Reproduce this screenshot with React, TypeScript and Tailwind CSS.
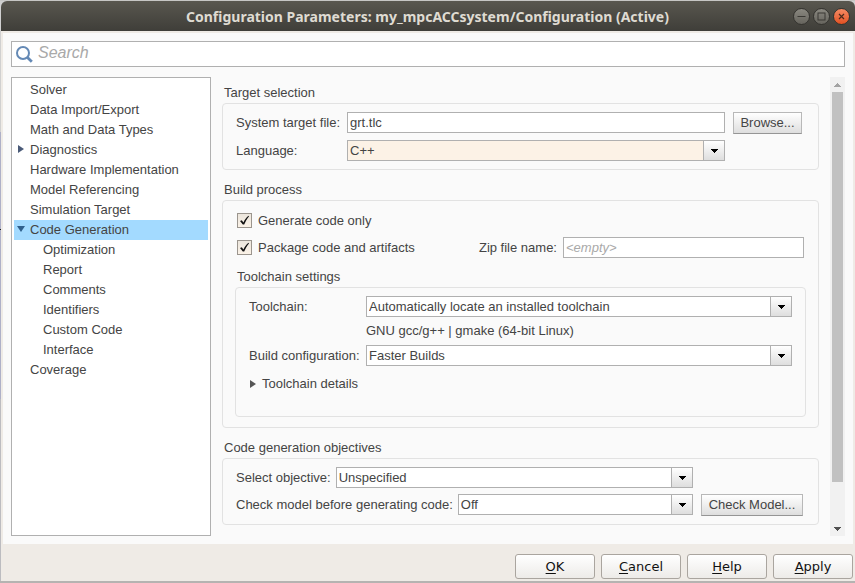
import type { ReactNode } from "react";

type TreeItem = {
  label: string;
  child?: boolean;
  arrow?: "right" | "down";
  selected?: boolean;
};

const TREE: TreeItem[] = [
  { label: "Solver" },
  { label: "Data Import/Export" },
  { label: "Math and Data Types" },
  { label: "Diagnostics", arrow: "right" },
  { label: "Hardware Implementation" },
  { label: "Model Referencing" },
  { label: "Simulation Target" },
  { label: "Code Generation", arrow: "down", selected: true },
  { label: "Optimization", child: true },
  { label: "Report", child: true },
  { label: "Comments", child: true },
  { label: "Identifiers", child: true },
  { label: "Custom Code", child: true },
  { label: "Interface", child: true },
  { label: "Coverage" },
];

function Tree() {
  return (
    <nav className="w-[200px] shrink-0 border border-[#b0b0b0] bg-white p-0.5">
      <ul>
        {TREE.map((item) => (
          <li key={item.label}>
            <button
              type="button"
              aria-current={item.selected ? "page" : undefined}
              className={`flex h-5 w-full items-center text-left ${
                item.selected ? "bg-[#a3daff]" : ""
              } ${item.child ? "pl-[29px]" : ""}`}
            >
              {!item.child && (
                <span className="flex w-4 shrink-0 items-center pb-0.5 pl-[3px]">
                  {item.arrow === "right" && (
                    <svg width="8" height="8" viewBox="0 0 8 8" fill="#4a5a78">
                      <path d="M1 0 L7 4 L1 8 Z" />
                    </svg>
                  )}
                  {item.arrow === "down" && (
                    <svg width="8" height="8" viewBox="0 0 8 8" fill="#2f5f8c">
                      <path d="M0 1 H8 L4 7 Z" />
                    </svg>
                  )}
                </span>
              )}
              {item.label}
            </button>
          </li>
        ))}
      </ul>
    </nav>
  );
}

function Group({
  title,
  className = "",
  children,
}: {
  title: string;
  className?: string;
  children: ReactNode;
}) {
  return (
    <section aria-label={title}>
      <h2 className="h-5 pl-0.5 leading-5">{title}</h2>
      <div className={`rounded-[4px] border border-[#e2e2e2] ${className}`}>{children}</div>
    </section>
  );
}

function Select({
  id,
  value,
  className = "bg-white",
}: {
  id: string;
  value: string;
  className?: string;
}) {
  return (
    <div className="grid h-[21px] min-w-0 flex-1 grid-rows-[19px] border border-[#b0b0b0]">
      <select
        id={id}
        defaultValue={value}
        className={`col-start-1 row-start-1 h-[19px] w-full appearance-none pr-6 pl-0.5 leading-[19px] outline-none ${className}`}
      >
        <option>{value}</option>
      </select>
      <span className="pointer-events-none col-start-1 row-start-1 flex w-[21px] items-center justify-center justify-self-end border-l border-[#b0b0b0] bg-linear-to-b from-white to-[#dedede]">
        <svg width="7" height="4" viewBox="0 0 7 4" fill="#000" shapeRendering="crispEdges">
          <path d="M0 0h7v1h-1v1h-1v1h-1v1h-1v-1h-1v-1h-1v-1h-1z" />
        </svg>
      </span>
    </div>
  );
}

function SmallButton({ className, children }: { className: string; children: ReactNode }) {
  return (
    <button
      type="button"
      className={`h-[22px] border border-[#b8b8b8] border-b-[#959595] bg-linear-to-b from-white to-[#dedede] leading-5 whitespace-nowrap ${className}`}
    >
      {children}
    </button>
  );
}

function Check({ id, label }: { id: string; label: string }) {
  return (
    <div className="flex items-center gap-1.5">
      <span className="grid size-[15px] place-items-center">
        <input
          id={id}
          type="checkbox"
          defaultChecked
          className="col-start-1 row-start-1 size-[15px] appearance-none border border-[#9b958e] bg-linear-to-b from-[#ece6dd] to-[#fbf2e7]"
        />
        <svg
          className="pointer-events-none col-start-1 row-start-1"
          width="11"
          height="11"
          viewBox="0 0 11 11"
          fill="#111"
        >
          <path d="M1 6 L2.8 5.2 L4.4 7.4 C5.6 4.8 7.4 2.3 9.6 0.8 L10 1.5 C8 3.8 6.4 6.6 5.2 9.6 L3.8 9.6 Z" />
        </svg>
      </span>
      <label htmlFor={id}>{label}</label>
    </div>
  );
}

function FooterButton({ hot, rest }: { hot: string; rest: string }) {
  return (
    <button
      type="button"
      className="h-[25px] w-20 rounded-[3px] border border-[#aaa59f] bg-linear-to-b from-white to-[#edebe8] leading-[23px] text-[#111]"
    >
      <span className="underline underline-offset-2">{hot}</span>
      {rest}
    </button>
  );
}

function ScrollBar() {
  return (
    <div className="flex w-[15px] shrink-0 flex-col items-center bg-[#f1f1f1]">
      <div className="flex h-[15px] shrink-0 items-center">
        <svg width="7" height="4" viewBox="0 0 7 4" fill="#a3a3a3" shapeRendering="crispEdges">
          <path d="M3 0h1v1h1v1h1v1h1v1h-7v-1h1v-1h1v-1h1z" />
        </svg>
      </div>
      <div className="flex w-[11px] flex-1 flex-col">
        <div className="h-[91%] bg-[#c1c1c1]" />
      </div>
      <div className="flex h-[15px] shrink-0 items-center">
        <svg width="7" height="4" viewBox="0 0 7 4" fill="#505050" shapeRendering="crispEdges">
          <path d="M0 0h7v1h-1v1h-1v1h-1v1h-1v-1h-1v-1h-1v-1h-1z" />
        </svg>
      </div>
    </div>
  );
}

function TitleBar() {
  return (
    <header className="flex h-[30px] shrink-0 items-center rounded-t-md bg-linear-to-b from-[#59574f] to-[#3f3e39] pr-[5px] pl-[61px] font-['Noto_Sans',sans-serif] text-[14px] font-bold text-[#dfdbd2]">
      <h1 className="flex-1 text-center whitespace-nowrap">
        Configuration Parameters: my_mpcACCsystem/Configuration (Active)
      </h1>
      <div className="flex gap-[3px]">
        <button
          type="button"
          aria-label="Minimize"
          className="flex size-[17px] items-center justify-center rounded-full border border-[#34332f] bg-linear-to-b from-[#8a8880] to-[#66645d]"
        >
          <svg width="9" height="9" viewBox="0 0 9 9" stroke="#3a3934" fill="none">
            <path d="M0.5 4.5h8" />
          </svg>
        </button>
        <button
          type="button"
          aria-label="Maximize"
          className="flex size-[17px] items-center justify-center rounded-full border border-[#34332f] bg-linear-to-b from-[#8a8880] to-[#66645d]"
        >
          <svg width="9" height="9" viewBox="0 0 9 9" stroke="#3a3934" fill="none">
            <rect x="1" y="1" width="7" height="7" />
          </svg>
        </button>
        <button
          type="button"
          aria-label="Close"
          className="flex size-[17px] items-center justify-center rounded-full border border-[#34332f] bg-linear-to-b from-[#f58a63] to-[#e2501f]"
        >
          <svg width="9" height="9" viewBox="0 0 9 9" stroke="#4a2a1c" strokeWidth="1.2" fill="none">
            <path d="M2 2l5 5M7 2l-5 5" />
          </svg>
        </button>
      </div>
    </header>
  );
}

export default function App() {
  return (
    <div className="flex min-h-screen flex-col border-t border-b-2 border-t-[#c6c6c4] border-b-[#b5b3b1] bg-[linear-gradient(#d0d0d0_0_131px,#aeb0c8_131px_228px,#222_228px_229px,#aeb0c8_229px_398px,#bcbcc0_398px)] pl-px font-['Liberation_Sans',Arial,sans-serif] text-[13px] text-[#444]">
      <TitleBar />
      <div className="flex flex-1 flex-col bg-[#efebe6] px-0.5 pt-0.5">
        <main className="flex flex-1 flex-col gap-2.5 bg-[#fafafa] px-2 py-2">
          <div className="flex h-[26px] items-center gap-[5px] border border-[#b0b0b0] bg-white pl-1">
            <svg width="17" height="17" viewBox="0 0 17 17" fill="none" stroke="#6489b5">
              <circle cx="7" cy="7" r="6" strokeWidth="2" />
              <path d="M11.5 11.5 L15.8 15.8" strokeWidth="2.8" />
            </svg>
            <input
              type="text"
              aria-label="Search"
              placeholder="Search"
              className="h-5 min-w-0 flex-1 pb-0.5 text-[16px] outline-none placeholder:text-[#a9a9a9] placeholder:italic"
            />
          </div>

          <div className="flex flex-1">
            <Tree />
            <div className="flex min-w-0 flex-1 flex-col gap-2.5 px-[11px] pt-1.5 pb-[11px]">
              <Group
                title="Target selection"
                className="grid grid-cols-[103px_1fr_auto] items-start gap-x-2 gap-y-1.5 py-2 pr-4 pl-[13px]"
              >
                <label htmlFor="target" className="leading-[21px] whitespace-nowrap">
                  System target file:
                </label>
                <input
                  id="target"
                  type="text"
                  defaultValue="grt.tlc"
                  className="h-[21px] w-full border border-[#b0b0b0] bg-white pl-0.5 outline-none"
                />
                <SmallButton className="w-[69px]">Browse...</SmallButton>
                <label htmlFor="language" className="leading-[21px]">
                  Language:
                </label>
                <Select id="language" value="C++" className="bg-[#fcf2e6]" />
              </Group>

              <Group title="Build process" className="pt-[9px] pb-2.5">
                <div className="flex h-[21px] items-center px-3.5">
                  <Check id="gen" label="Generate code only" />
                </div>
                <div className="mt-1.5 flex h-[21px] items-center justify-between px-3.5">
                  <Check id="pack" label="Package code and artifacts" />
                  <div className="flex items-center gap-1.5">
                    <label htmlFor="zip">Zip file name:</label>
                    <input
                      id="zip"
                      type="text"
                      placeholder="<empty>"
                      className="h-[21px] w-[241px] border border-[#b0b0b0] bg-white pl-0.5 outline-none placeholder:text-[#a9a9a9] placeholder:italic"
                    />
                  </div>
                </div>
                <div className="mt-[9px] px-3">
                  <Group title="Toolchain settings" className="px-[13px] pt-2 pb-[22px]">
                    <div className="grid grid-cols-[117px_1fr] leading-[21px]">
                      <label htmlFor="toolchain">Toolchain:</label>
                      <Select id="toolchain" value="Automatically locate an installed toolchain" />
                      <p className="col-start-2 h-7 leading-7">GNU gcc/g++ | gmake (64-bit Linux)</p>
                      <label htmlFor="config" className="col-start-1 whitespace-nowrap">
                        Build configuration:
                      </label>
                      <Select id="config" value="Faster Builds" />
                    </div>
                    <button type="button" className="mt-2 flex h-5 items-center gap-1.5 pl-px">
                      <svg width="6" height="8" viewBox="0 0 6 8" fill="#555">
                        <path d="M0 0 L6 4 L0 8 Z" />
                      </svg>
                      Toolchain details
                    </button>
                  </Group>
                </div>
              </Group>

              <Group
                title="Code generation objectives"
                className="grid grid-cols-[1fr_auto] items-start gap-x-2 gap-y-1.5 py-2 pr-[15px] pl-[13px]"
              >
                <div className="flex items-center gap-[5px]">
                  <label htmlFor="objective">Select objective:</label>
                  <Select id="objective" value="Unspecified" />
                </div>
                <div className="col-start-1 flex items-center gap-[5px]">
                  <label htmlFor="check">Check model before generating code:</label>
                  <Select id="check" value="Off" />
                </div>
                <SmallButton className="w-[102px]">Check Model...</SmallButton>
              </Group>
            </div>
            <ScrollBar />
          </div>
        </main>
        <footer className="-mr-0.5 flex h-[37px] shrink-0 items-start justify-end gap-1.5 pt-2.5 pr-0.5 font-['DejaVu_Sans',sans-serif]">
          <FooterButton hot="O" rest="K" />
          <FooterButton hot="C" rest="ancel" />
          <FooterButton hot="H" rest="elp" />
          <FooterButton hot="A" rest="pply" />
        </footer>
      </div>
    </div>
  );
}
